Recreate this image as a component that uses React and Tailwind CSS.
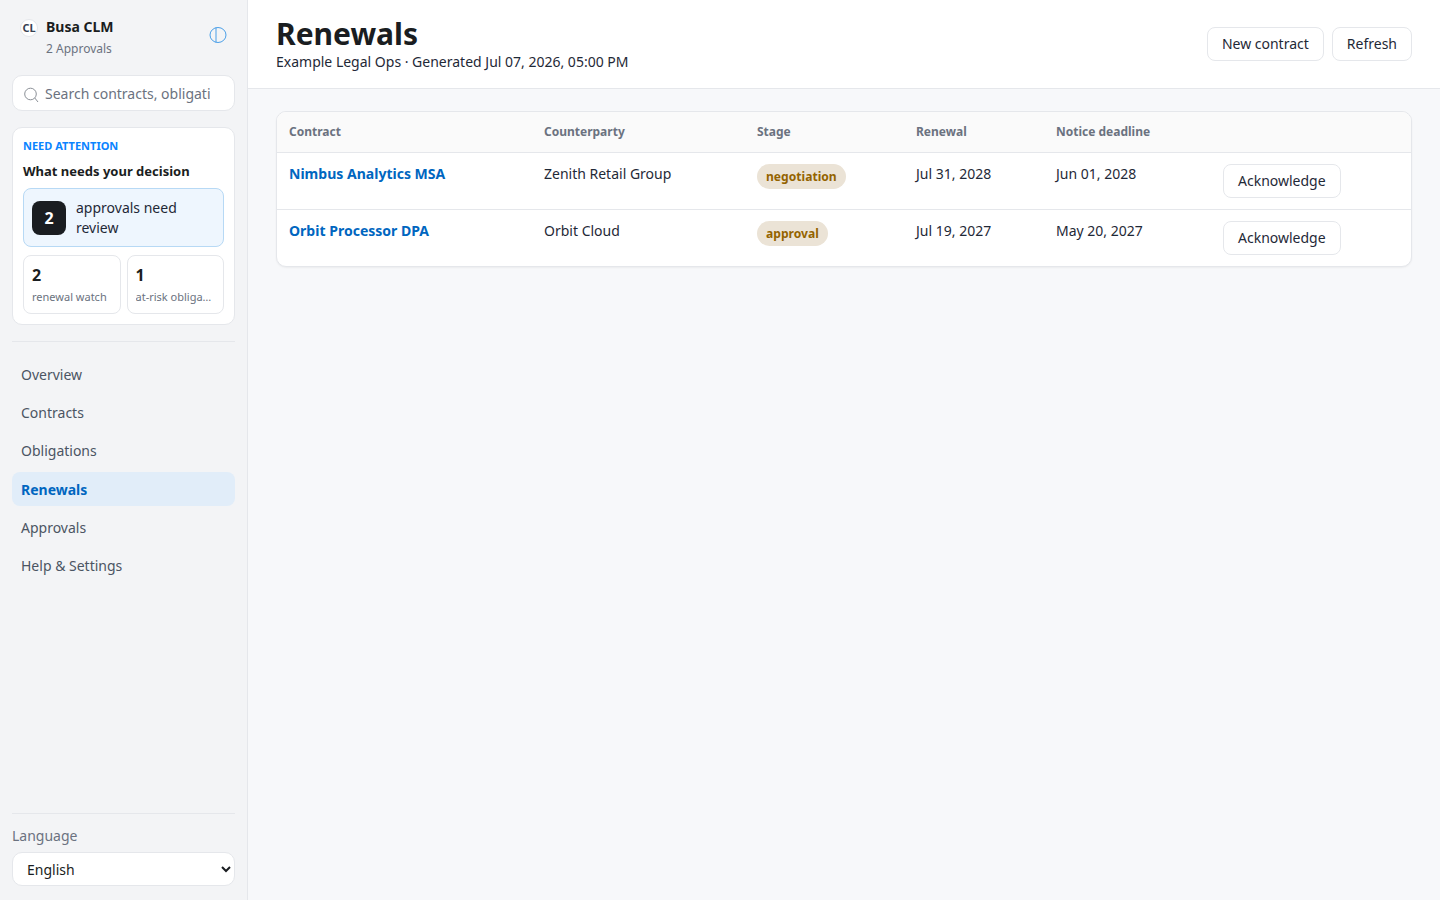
const navItems = ["Overview", "Contracts", "Obligations", "Renewals", "Approvals", "Help & Settings"];

const rows = [
  { name: "Nimbus Analytics MSA", party: "Zenith Retail Group", stage: "negotiation", renewal: "Jul 31, 2028", notice: "Jun 01, 2028" },
  { name: "Orbit Processor DPA", party: "Orbit Cloud", stage: "approval", renewal: "Jul 19, 2027", notice: "May 20, 2027" },
];

function Sidebar() {
  return (
    <aside className="flex h-[900px] w-[248px] shrink-0 flex-col border-r border-[#e5e7eb] bg-[#f3f4f6] px-3 pt-4 pb-[14px]">
      <div className="flex items-start pl-2 pr-2">
        <div className="mt-[3px] flex h-[18px] w-[18px] shrink-0 items-center justify-center rounded-full border border-[#e5e7eb] bg-white text-[11px] font-bold text-[#374151]">CL</div>
        <div className="ml-2 flex-1">
          <div className="text-[14px] leading-[22px] font-bold text-[#1a1d21]">Busa CLM</div>
          <div className="mt-[1px] text-[12px] leading-[20px] text-[#6b7280]">2 Approvals</div>
        </div>
        <svg className="mt-[10px]" width="18" height="18" viewBox="0 0 18 18" fill="none" stroke="#4a9fe8" strokeWidth="1">
          <ellipse cx="9" cy="9" rx="8" ry="7.5" />
          <line x1="7" y1="1.5" x2="7" y2="16.5" />
        </svg>
      </div>
      <div className="mt-4 flex h-[36px] items-center rounded-[10px] border border-[#e5e7eb] bg-white pl-[10px] pr-6">
        <svg className="mt-[3px] shrink-0" width="16" height="16" viewBox="0 0 16 16" fill="none" stroke="#8b9097" strokeWidth="1">
          <circle cx="7.5" cy="7" r="5.8" />
          <line x1="11.8" y1="11" x2="15" y2="15" />
        </svg>
        <div className="ml-[6px] mt-[1px] overflow-hidden whitespace-nowrap text-[14px] text-[#6b7280]">Search contracts, obligations</div>
      </div>
      <section className="mt-4 rounded-[10px] border border-[#e5e7eb] bg-white px-[10px] pt-[10px] pb-[10px]">
        <div className="text-[11px] leading-[16px] font-bold text-[#0a84ff]">NEED ATTENTION</div>
        <div className="mt-[8px] text-[13px] leading-[18px] font-bold text-[#1a1d21]">What needs your decision</div>
        <div className="mt-[8px] flex h-[59px] items-center rounded-[8px] border border-[#b7d9f5] bg-[#eef6fe] pl-2 pr-2">
          <div className="flex h-[34px] w-[34px] shrink-0 items-center justify-center rounded-[8px] bg-[#1a1d21] text-[16px] font-bold text-white">2</div>
          <div className="ml-[10px] text-[14px] leading-[20px] text-[#1f2937]">approvals need review</div>
        </div>
        <div className="mt-2 grid grid-cols-2 gap-[6px]">
          <div className="h-[59px] min-w-0 rounded-[8px] border border-[#e5e7eb] bg-white px-2 pt-[7px]">
            <div className="text-[16px] leading-[24px] font-bold text-[#1a1d21]">2</div>
            <div className="mt-[1px] truncate text-[11px] leading-[18px] text-[#6b7280]">renewal watch</div>
          </div>
          <div className="h-[59px] min-w-0 rounded-[8px] border border-[#e5e7eb] bg-white px-2 pt-[7px]">
            <div className="text-[16px] leading-[24px] font-bold text-[#1a1d21]">1</div>
            <div className="mt-[1px] truncate text-[11px] leading-[18px] text-[#6b7280]">at-risk obligations</div>
          </div>
        </div>
      </section>
      <div className="mt-4 border-t border-[#e5e7eb]" />
      <nav className="mt-[15.4px] flex flex-col gap-1">
        {navItems.map((item) => (
          <div
            key={item}
            className={
              item === "Renewals"
                ? "flex h-[34.2px] items-center rounded-[8px] bg-[#e1edf9] px-[9px] text-[14px] font-bold text-[#0066c0]"
                : "flex h-[34.2px] items-center rounded-[8px] px-[9px] text-[14px] text-[#4b5563]"
            }
          >
            {item}
          </div>
        ))}
      </nav>
      <div className="mt-auto border-t border-[#e5e7eb] pt-[12px]">
        <div className="text-[14px] leading-[20px] text-[#6b7280]">Language</div>
        <select className="mt-[6px] h-[34px] w-full rounded-[10px] border border-[#e5e7eb] bg-white pl-[10px] text-[14px] text-[#1a1d21]" defaultValue="English">
          <option>English</option>
        </select>
      </div>
    </aside>
  );
}

function Btn({ children }) {
  return (
    <button className="h-[34px] rounded-[8px] border border-[#e5e7eb] bg-white px-[14px] text-[14px] leading-[20px] text-[#1f2937]">
      {children}
    </button>
  );
}

export default function App() {
  return (
    <div className="flex h-[900px] w-[1440px] overflow-hidden bg-[#f7f8fa] text-[#1a1d21] [font-family:'Noto_Sans',sans-serif]">
      <Sidebar />
      <main className="min-w-0 flex-1">
        <header className="flex h-[89px] items-center justify-between border-b border-[#e5e7eb] bg-white px-7">
          <div className="-mt-[1px]">
            <h1 className="text-[30px] leading-[36px] font-bold text-[#1a1d21]">Renewals</h1>
            <div className="text-[14px] leading-[20px] text-[#1f2937]">Example Legal Ops · Generated Jul 07, 2026, 05:00 PM</div>
          </div>
          <div className="flex gap-2">
            <Btn>New contract</Btn>
            <Btn>Refresh</Btn>
          </div>
        </header>
        <div className="px-7 pt-[22px]">
          <div className="overflow-hidden rounded-[10px] border border-[#e5e7eb] bg-white shadow-[0_1px_2px_rgba(0,0,0,0.05)]">
            <table className="w-full table-fixed border-collapse text-left">
              <colgroup>
                <col className="w-[255px]" />
                <col className="w-[213px]" />
                <col className="w-[159px]" />
                <col className="w-[140px]" />
                <col className="w-[167px]" />
                <col />
              </colgroup>
              <thead>
                <tr className="h-[40px] bg-[#fafafa] text-[12px] font-bold text-[#6b7280]">
                  <th className="px-3">Contract</th>
                  <th className="px-3">Counterparty</th>
                  <th className="px-3">Stage</th>
                  <th className="px-3">Renewal</th>
                  <th className="px-3">Notice deadline</th>
                  <th className="px-3" />
                </tr>
              </thead>
              <tbody>
                {rows.map((r) => (
                  <tr key={r.name} className="h-[57px] border-t border-[#e5e7eb] align-top text-[14px] text-[#1f2937]">
                    <td className="px-3 pt-[11px] text-[14.04px] leading-[20px] font-bold text-[#0066c0]">{r.name}</td>
                    <td className="px-3 pt-[11px] leading-[20px]">{r.party}</td>
                    <td className="px-3 pt-[11px]">
                      <span className="inline-block h-[25px] rounded-full bg-[#ebe3d6] px-[9px] text-[12.1px] leading-[25px] font-bold text-[#946300]">{r.stage}</span>
                    </td>
                    <td className="px-3 pt-[11px] leading-[20px]">{r.renewal}</td>
                    <td className="px-3 pt-[11px] leading-[20px]">{r.notice}</td>
                    <td className="px-3 pt-[11px]"><Btn>Acknowledge</Btn></td>
                  </tr>
                ))}
              </tbody>
            </table>
          </div>
        </div>
      </main>
    </div>
  );
}
